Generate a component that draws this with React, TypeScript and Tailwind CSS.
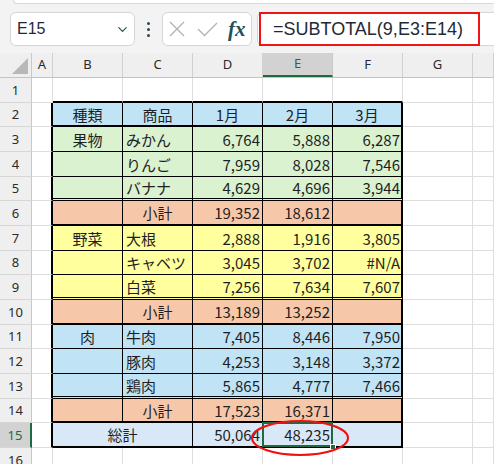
import { ChevronDown } from "lucide-react";

type Band = "head" | "fruit" | "sub" | "veg" | "meat" | "total";
type Line = "thin" | "thick" | "double";

type TableRow = {
  n: number;
  band: Band;
  line: Line;
  b?: string;
  c?: string;
  d?: string;
  e?: string;
  f?: string;
  merged?: boolean;
};

const bandBg: Record<Band, string> = {
  head: "bg-[#c0e4f6]",
  fruit: "bg-[#daf2d0]",
  sub: "bg-[#f7c7aa]",
  veg: "bg-[#ffff9e]",
  meat: "bg-[#c0e4f6]",
  total: "bg-[#d9e8f7]",
};

const bottomLine: Record<Line, string> = {
  thin: "border-b border-b-black",
  thick: "border-b-2 border-b-black",
  double: "border-b-[3px] border-b-black border-double",
};

const tableRows: TableRow[] = [
  { n: 2, band: "head", line: "thick", b: "種類", c: "商品", d: "1月", e: "2月", f: "3月" },
  { n: 3, band: "fruit", line: "thin", b: "果物", c: "みかん", d: "6,764", e: "5,888", f: "6,287" },
  { n: 4, band: "fruit", line: "thin", c: "りんご", d: "7,959", e: "8,028", f: "7,546" },
  { n: 5, band: "fruit", line: "double", c: "バナナ", d: "4,629", e: "4,696", f: "3,944" },
  { n: 6, band: "sub", line: "thick", c: "小計", d: "19,352", e: "18,612" },
  { n: 7, band: "veg", line: "thin", b: "野菜", c: "大根", d: "2,888", e: "1,916", f: "3,805" },
  { n: 8, band: "veg", line: "thin", c: "キャベツ", d: "3,045", e: "3,702", f: "#N/A" },
  { n: 9, band: "veg", line: "double", c: "白菜", d: "7,256", e: "7,634", f: "7,607" },
  { n: 10, band: "sub", line: "thick", c: "小計", d: "13,189", e: "13,252" },
  { n: 11, band: "meat", line: "thin", b: "肉", c: "牛肉", d: "7,405", e: "8,446", f: "7,950" },
  { n: 12, band: "meat", line: "thin", c: "豚肉", d: "4,253", e: "3,148", f: "3,372" },
  { n: 13, band: "meat", line: "double", c: "鶏肉", d: "5,865", e: "4,777", f: "7,466" },
  { n: 14, band: "sub", line: "thick", c: "小計", d: "17,523", e: "16,371" },
  { n: 15, band: "total", line: "thick", b: "総計", d: "50,064", e: "48,235", merged: true },
];

const grid = "border-r border-b border-[#dedede]";

function TableCells({ r }: { r: TableRow }) {
  const bg = bandBg[r.band];
  const line = bottomLine[r.line];
  const isHead = r.band === "head";
  const numAlign = isHead ? "justify-center" : "justify-end pr-[2px]";
  const cAlign = isHead || r.c === "小計" ? "justify-center" : "justify-start pl-[3px]";

  return (
    <>
      {r.merged ? (
        <div className={`w-[140px] shrink-0 flex items-center justify-center border-r border-r-black ${bg} ${line}`}>
          {r.b}
        </div>
      ) : (
        <>
          <div className={`w-[70px] shrink-0 flex items-center justify-center border-r border-r-black ${bg} ${line}`}>
            {r.b}
          </div>
          <div className={`w-[70px] shrink-0 flex items-center border-r border-r-black ${cAlign} ${bg} ${line}`}>
            {r.c}
          </div>
        </>
      )}
      <div className={`w-[70px] shrink-0 flex items-center border-r border-r-black ${numAlign} ${bg} ${line}`}>
        {r.d}
      </div>
      <div className={`relative w-[70px] shrink-0 flex items-center border-r border-r-black ${numAlign} ${bg} ${line}`}>
        {r.e}
        {r.n === 15 && (
          <>
            {/* active cell */}
            <div className="absolute -left-[1px] -top-[1px] -right-[1px] -bottom-[1px] border-2 border-[#1e6b41]" />
            <div className="absolute -right-[4px] -bottom-[4px] w-[6px] h-[6px] bg-[#1e6b41] border border-white" />
            {/* red annotation */}
            <svg className="absolute left-[-13px] top-[-6px] z-10 overflow-visible" width="102" height="40">
              <ellipse cx="50" cy="21" rx="48" ry="17" fill="none" stroke="#f01010" strokeWidth="2" />
            </svg>
          </>
        )}
      </div>
      <div className={`w-[70px] shrink-0 flex items-center border-r-2 border-r-black ${isHead ? "justify-center" : "justify-end pr-[1px]"} ${bg} ${line}`}>
        {r.f}
      </div>
    </>
  );
}

function SheetRow({ n }: { n: number }) {
  const h = n % 3 === 2 ? "h-[24px]" : "h-[25px]";
  const r = tableRows.find((x) => x.n === n);
  const selected = n === 15;

  return (
    <div className={`flex ${h}`}>
      <div
        className={`w-[32px] shrink-0 flex items-center justify-center border-b border-b-[#d6d6d6] font-['Noto_Sans',sans-serif] text-[13px] ${
          selected
            ? "bg-[#d2d2d2] text-[#1e6b41] border-r-2 border-r-[#1e6b41]"
            : "bg-[#efefef] text-[#2a2a2a] border-r border-r-[#c8c8c8]"
        }`}
      >
        {n}
      </div>
      <div className={`w-[21px] shrink-0 border-b border-b-[#dedede] ${r ? "border-r-2 border-r-black" : "border-r border-r-[#dedede]"}`} />
      {r ? (
        <TableCells r={r} />
      ) : (
        ["B", "C", "D", "E", "F"].map((k) => (
          <div
            key={k}
            className={`w-[70px] shrink-0 border-r border-r-[#dedede] ${n === 1 ? "border-b-2 border-b-black" : "border-b border-b-[#dedede]"}`}
          />
        ))
      )}
      <div className={`w-[70px] shrink-0 ${grid}`} />
      <div className={`w-[21px] shrink-0 ${grid}`} />
    </div>
  );
}

export default function App() {
  const cols = [
    { k: "A", w: "w-[21px]" },
    { k: "B", w: "w-[70px]" },
    { k: "C", w: "w-[70px]" },
    { k: "D", w: "w-[70px]" },
    { k: "E", w: "w-[70px]" },
    { k: "F", w: "w-[70px]" },
    { k: "G", w: "w-[70px]" },
    { k: "", w: "w-[21px]" },
  ];

  return (
    <div className="w-[494px] h-[464px] overflow-hidden bg-white text-[#1f1f1f]">
      {/* formula bar */}
      <div className="h-[53px] bg-[#f3f3f3]">
        <div className="ml-[13px] h-[4px] bg-white border-b border-l border-[#d9d9d9] rounded-bl-[4px]" />
        <div className="flex items-center h-[34px] mt-[8px]">
          <div className="ml-[10px] w-[125px] h-[34px] shrink-0 flex items-center justify-between pl-[6px] pr-[4px] bg-white border border-[#d6d6d6] rounded-[6px]">
            <span className="font-['Liberation_Sans',sans-serif] text-[16px] text-[#1f2a36]">E15</span>
            <ChevronDown size={15} strokeWidth={2} className="text-[#2e5b4b]" />
          </div>
          <div className="w-[27px] shrink-0 flex flex-col items-center gap-[3px]">
            <span className="w-[3px] h-[3px] rounded-full bg-[#2d4756]" />
            <span className="w-[3px] h-[3px] rounded-full bg-[#2d4756]" />
            <span className="w-[3px] h-[3px] rounded-full bg-[#2d4756]" />
          </div>
          <div className="w-[90px] h-[34px] shrink-0 flex items-center bg-white border border-[#d6d6d6] rounded-[6px]">
            <svg width="16" height="16" viewBox="0 0 16 16" className="ml-[6px]">
              <path d="M1 1 L15 15 M15 1 L1 15" stroke="#b4b4b4" strokeWidth="1.4" fill="none" />
            </svg>
            <svg width="21" height="15" viewBox="0 0 21 15" className="ml-[12px]">
              <path d="M1 7 L7.5 13.5 L20 1" stroke="#b4b4b4" strokeWidth="1.4" fill="none" />
            </svg>
            <span className="ml-[10px] font-['Liberation_Serif',serif] italic font-bold text-[21px] leading-none text-[#22505a]">
              fx
            </span>
          </div>
          <div className="relative ml-[5px] flex-1 h-[34px] flex items-center bg-white border border-r-0 border-[#d6d6d6] rounded-l-[6px] pl-[15px]">
            <span className="font-['Liberation_Sans',sans-serif] text-[18px] text-[#1f2a36]">=SUBTOTAL(9,E3:E14)</span>
            <div className="absolute left-[1px] -top-[1px] w-[221px] h-[34px] border-2 border-[#f01414]" />
          </div>
        </div>
      </div>

      {/* column headers */}
      <div className="flex h-[25px] bg-[#efefef] border-b border-[#c4c4c4] font-['Noto_Sans',sans-serif] text-[13px] text-[#2a2a2a]">
        <div className="w-[32px] shrink-0 flex items-end justify-end pr-[3px] pb-[3px] border-r border-[#c8c8c8]">
          <svg width="16" height="16" viewBox="0 0 16 16">
            <polygon points="16,0 16,16 0,16" fill="#b8b8b8" />
          </svg>
        </div>
        {cols.map((c) =>
          c.k === "E" ? (
            <div
              key={c.k}
              className={`${c.w} shrink-0 flex items-center justify-center bg-[#d2d2d2] text-[#1e6b41] border-r border-r-[#c8c8c8] border-b-2 border-b-[#1e6b41]`}
            >
              {c.k}
            </div>
          ) : (
            <div key={c.k + c.w} className={`${c.w} shrink-0 flex items-center justify-center border-r border-[#d0d0d0]`}>
              {c.k}
            </div>
          )
        )}
      </div>

      {/* sheet */}
      <div className="font-['Noto_Sans_CJK_JP',sans-serif] text-[15px] leading-none text-[#1f1f1f]">
        {Array.from({ length: 16 }, (_, i) => (
          <SheetRow key={i + 1} n={i + 1} />
        ))}
      </div>
    </div>
  );
}
